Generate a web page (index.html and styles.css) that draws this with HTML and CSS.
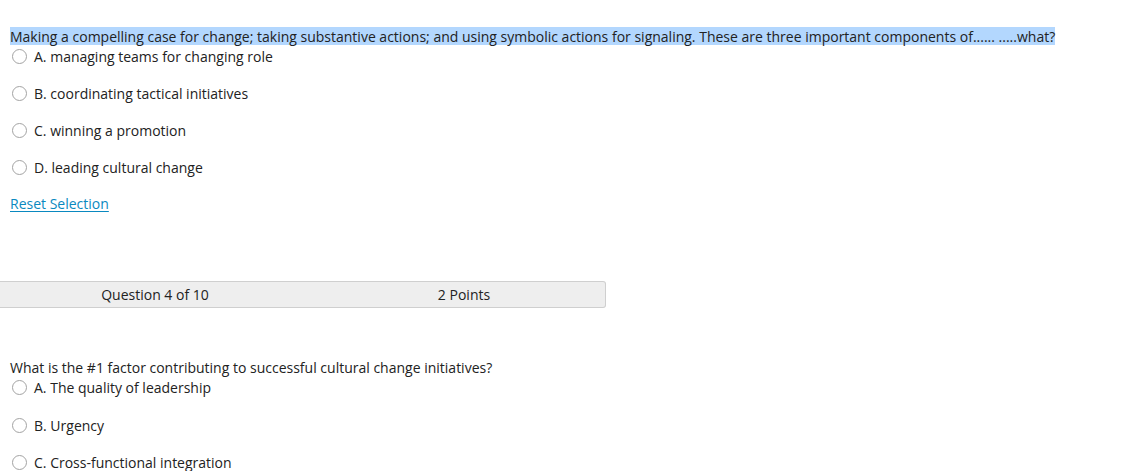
FILE: index.html
```html
<!DOCTYPE html>
<html>
<head>
<meta charset="utf-8">
<link rel="stylesheet" href="styles.css">
</head>
<body>
<div class="page">
  <section class="question first">
    <p class="qtext"><span class="hl">Making a compelling case for change; taking substantive actions; and using symbolic actions for signaling. These are three important components of...... .....what?</span></p>
    <ul class="options">
      <li class="opt"><span class="radio"></span><span>A. managing teams for changing role</span></li>
      <li class="opt"><span class="radio"></span><span>B. coordinating tactical initiatives</span></li>
      <li class="opt"><span class="radio"></span><span>C. winning a promotion</span></li>
      <li class="opt"><span class="radio"></span><span>D. leading cultural change</span></li>
    </ul>
    <a class="reset" href="#">Reset Selection</a>
  </section>

  <div class="qbar">
    <div class="qnum">Question 4 of 10</div>
    <div class="qpts">2 Points</div>
  </div>

  <section class="question second">
    <p class="qtext">What is the #1 factor contributing to successful cultural change initiatives?</p>
    <ul class="options">
      <li class="opt"><span class="radio"></span><span>A. The quality of leadership</span></li>
      <li class="opt"><span class="radio"></span><span>B. Urgency</span></li>
      <li class="opt"><span class="radio"></span><span>C. Cross-functional integration</span></li>
    </ul>
  </section>
</div>
</body>
</html>
```

FILE: styles.css
```css
html, body {
  margin: 0;
  padding: 0;
  background: #fff;
}
body {
  font-family: "Open Sans", "Liberation Sans", sans-serif;
  font-size: 14px;
  line-height: 19px;
  color: #222;
  overflow: hidden;
}
.page {
  padding-top: 26.5px;
}
.question {
  padding-left: 10px;
}
.qtext {
  margin: 0;
  height: 19px;
  white-space: nowrap;
}
.hl {
  background: #b3d7fe;
  display: inline-block;
  height: 18px;
}
.options {
  list-style: none;
  margin: 1px 0 0 0;
  padding: 0;
  display: flex;
  flex-direction: column;
  gap: 18.3px;
}
.opt {
  display: flex;
  align-items: center;
  height: 19px;
}
.radio {
  box-sizing: border-box;
  width: 15px;
  height: 15px;
  border: 1px solid #a3a3a3;
  border-radius: 50%;
  background: #fff;
  margin-left: 2px;
  margin-right: 7px;
  flex: none;
}
.reset {
  display: inline-block;
  margin-top: 17px;
  color: #0a89c0;
  text-decoration: underline;
  text-underline-offset: 2px;
}
.qbar {
  margin-top: 67.5px;
  width: 605px;
  height: 25px;
  background: #eeeeee;
  border: 1px solid #cfcfcf;
  border-left: none;
  border-radius: 0 3px 3px 0;
  display: grid;
  grid-template-columns: 310px 1fr;
  align-items: center;
  color: #222;
}
.qnum, .qpts {
  text-align: center;
}
.qpts {
  padding-left: 26px;
  padding-right: 13px;
}
.second {
  margin-top: 50.5px;
}
```
